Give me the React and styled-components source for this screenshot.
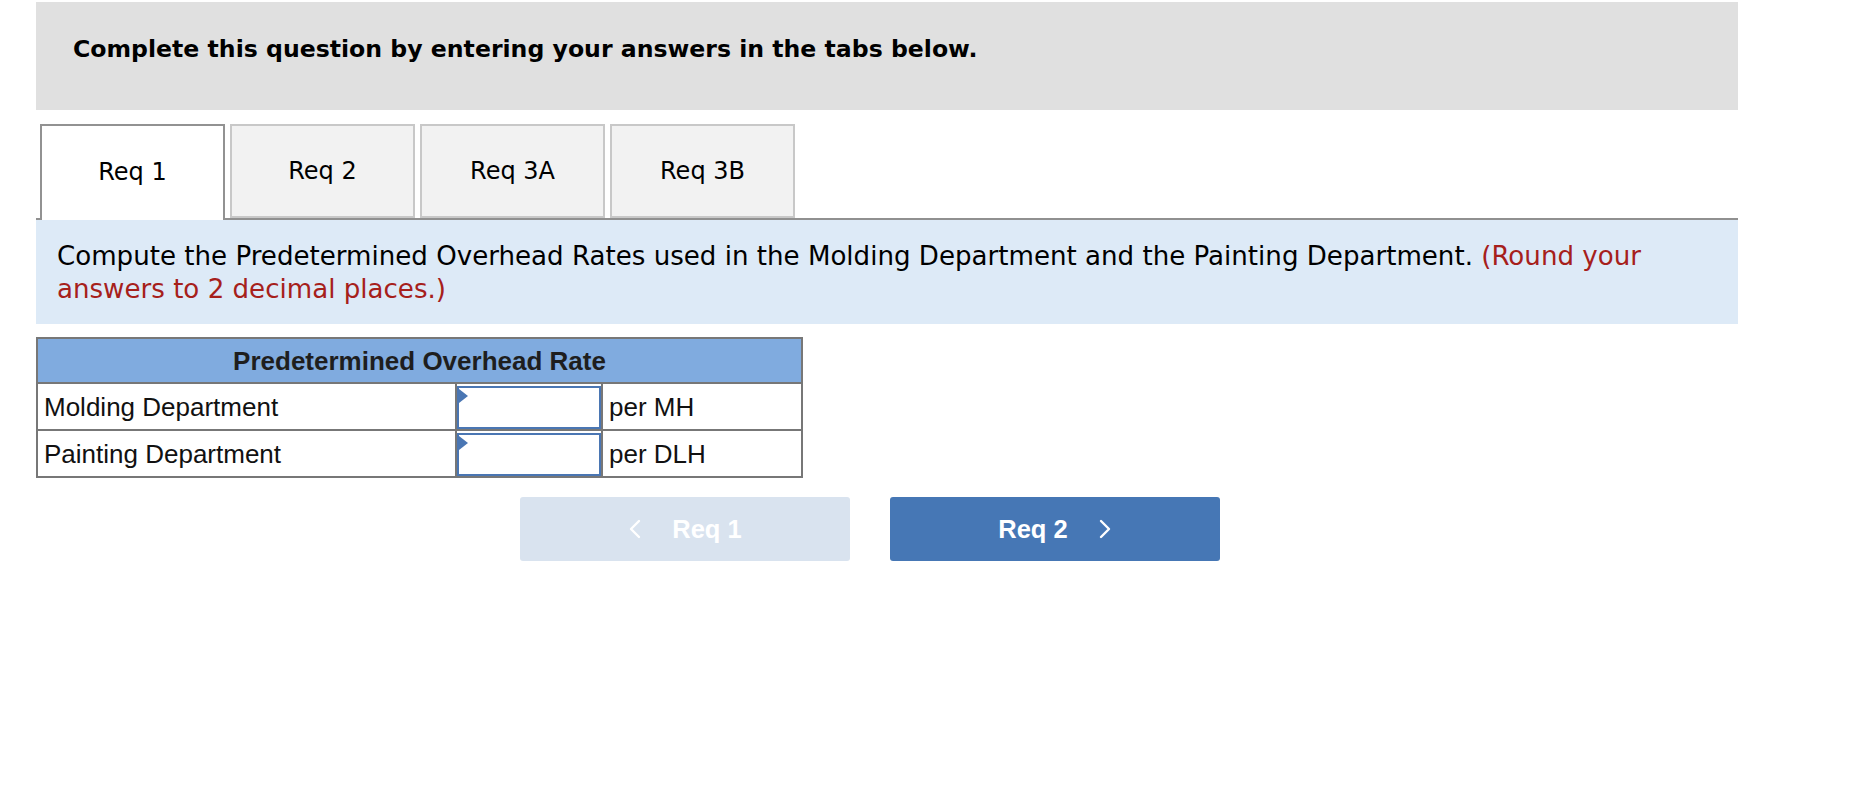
import React from 'react'
import styled, { createGlobalStyle } from 'styled-components'

const GlobalStyle = createGlobalStyle`
  html, body {
    margin: 0;
    padding: 0;
    background: #fff;
  }
`

const rows = [
  { id: 1, label: 'Molding Department', unit: 'per MH' },
  { id: 2, label: 'Painting Department', unit: 'per DLH' },
]

const tabs = ['Req 1', 'Req 2', 'Req 3A', 'Req 3B']

const Page = styled.div`
  width: 1702px;
  padding: 2px 0 0 36px;
  font-family: 'DejaVu Sans', Verdana, sans-serif;
`

const Banner = styled.div`
  background: #e0e0e0;
  height: 108px;
  padding: 0 0 0 37px;
  box-sizing: border-box;

  h1 {
    margin: 0;
    padding-top: 33px;
    font-size: 23.6px;
    font-weight: 700;
    color: #000;
    line-height: 28px;
  }
`

const TabRow = styled.div`
  display: flex;
  align-items: flex-end;
  gap: 5px;
  margin-top: 14px;
  padding-left: 4px;
  border-bottom: 2px solid #909090;
  height: 94px;
`

const Tab = styled.div`
  width: 185px;
  box-sizing: border-box;
  height: ${(p) => (p.$active ? '96px' : '94px')};
  margin-bottom: ${(p) => (p.$active ? '-2px' : '0')};
  background: ${(p) => (p.$active ? '#fff' : '#f2f2f2')};
  border: 2px solid ${(p) => (p.$active ? '#929292' : '#c8c8c8')};
  border-bottom: ${(p) => (p.$active ? 'none' : '2px solid #c8c8c8')};
  display: flex;
  align-items: center;
  justify-content: center;
  padding-bottom: ${(p) => (p.$active ? '2px' : '0')};
  font-size: 24px;
  color: #000;
`

const Instructions = styled.div`
  background: #ddeaf7;
  padding: 20px 60px 18px 21px;
  font-size: 26.1px;
  line-height: 33px;
  color: #000;

  span {
    color: #a6201b;
  }
`

const RateTable = styled.table`
  margin-top: 13px;
  border-collapse: collapse;
  width: 767px;
  font-family: 'Liberation Sans', Arial, sans-serif;
  font-size: 26px;
  line-height: 30px;
  color: #111;

  th {
    background: #80abdf;
    border: 2px solid #777;
    height: 43px;
    font-weight: 700;
    color: #1e1e1e;
    padding: 0;
  }

  td {
    border: 2px solid #777;
    height: 44px;
    padding: 0 6px;
  }
`

const LabelCell = styled.td`
  && {
    width: 405px;
  }
`

const InputCell = styled.td`
  && {
    width: 144px;
    padding: 1px 0 0 0;
  }
`

const AnswerBox = styled.div`
  position: relative;
  height: 43px;
  box-sizing: border-box;
  border: 2.5px solid #4a76b3;
  background: #fff;

  &::before {
    content: '';
    position: absolute;
    left: 0;
    top: 1px;
    border-top: 7px solid transparent;
    border-bottom: 7px solid transparent;
    border-left: 9px solid #4a76b3;
  }
`

const NavRow = styled.div`
  display: flex;
  gap: 40px;
  margin-top: 19px;
  padding-left: 484px;
`

const NavButton = styled.button`
  width: 330px;
  height: 64px;
  border: none;
  border-radius: 3px;
  background: ${(p) => (p.$disabled ? '#d9e3ef' : '#4677b5')};
  color: #fff;
  font-family: 'Liberation Sans', Arial, sans-serif;
  font-weight: 700;
  font-size: 25.5px;
  display: flex;
  align-items: center;
  justify-content: center;
  gap: 30px;
  cursor: ${(p) => (p.$disabled ? 'default' : 'pointer')};

  svg {
    width: 14px;
    height: 20px;
  }
`

const Chevron = ({ dir }) => (
  <svg viewBox="0 0 14 20" fill="none" stroke="#fff" strokeWidth="2.4" strokeLinecap="round" strokeLinejoin="round">
    {dir === 'left' ? <polyline points="11,2 3,10 11,18" /> : <polyline points="3,2 11,10 3,18" />}
  </svg>
)

const App = () => (
  <Page>
    <GlobalStyle />
    <Banner>
      <h1>Complete this question by entering your answers in the tabs below.</h1>
    </Banner>

    <TabRow>
      {tabs.map((t, i) => (
        <Tab key={t} $active={i === 0}>
          {t}
        </Tab>
      ))}
    </TabRow>

    <Instructions>
      Compute the Predetermined Overhead Rates used in the Molding Department and the Painting
      Department. <span>(Round your answers to 2 decimal places.)</span>
    </Instructions>

    <RateTable>
      <thead>
        <tr>
          <th colSpan={3}>Predetermined Overhead Rate</th>
        </tr>
      </thead>
      <tbody>
        {rows.map((r) => (
          <tr key={r.id}>
            <LabelCell>{r.label}</LabelCell>
            <InputCell>
              <AnswerBox />
            </InputCell>
            <td>{r.unit}</td>
          </tr>
        ))}
      </tbody>
    </RateTable>

    <NavRow>
      <NavButton $disabled>
        <Chevron dir="left" />
        Req 1
      </NavButton>
      <NavButton>
        Req 2
        <Chevron dir="right" />
      </NavButton>
    </NavRow>
  </Page>
)

export default App
